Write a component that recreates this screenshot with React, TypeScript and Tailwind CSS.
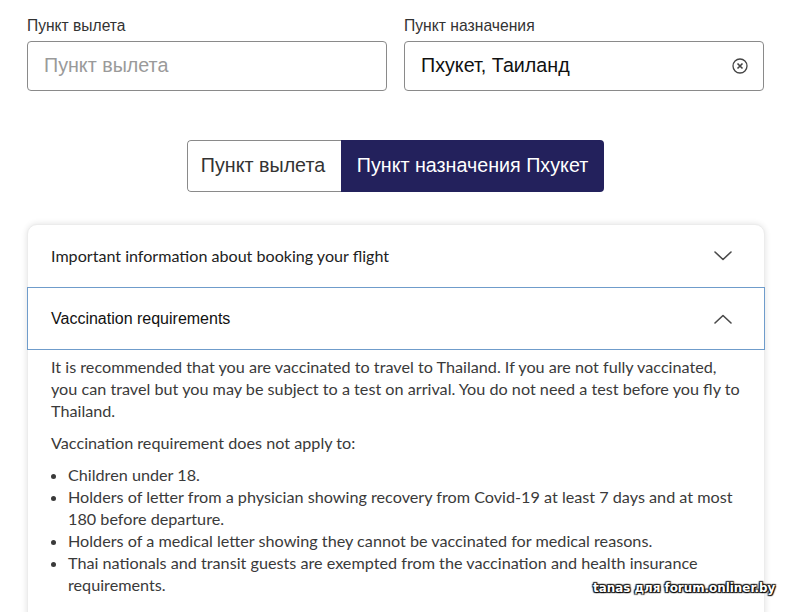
import React from "react";

const Chevron = ({ up }: { up?: boolean }) => (
  <svg width="18" height="10" viewBox="0 0 18 10" fill="none" stroke="#4a4a4a" strokeWidth="1.6" strokeLinecap="round" strokeLinejoin="round">
    {up ? <path d="M1 9 L9 1.5 L17 9" /> : <path d="M1 1 L9 8.5 L17 1" />}
  </svg>
);

export default function App() {
  const sans = { fontFamily: '"Liberation Sans", Arial, sans-serif' };
  const body = { fontFamily: 'Lato, "Open Sans", sans-serif' };
  return (
    <div className="relative w-[800px] h-[612px] overflow-hidden bg-white" style={sans}>
      <div className="px-[27px] pt-[17px]">
        <div className="grid grid-cols-2 gap-[17px] w-[737px]">
          <div>
            <div className="text-[15.6px] text-[#333] leading-[18px] mb-[6px]">Пункт вылета</div>
            <div className="h-[50px] border border-[#8a8a8a] rounded-[4px] flex items-center pl-[16px] text-[19.7px] text-[#9a9a9a]">
              Пункт вылета
            </div>
          </div>
          <div>
            <div className="text-[15.7px] text-[#333] leading-[18px] mb-[6px]">Пункт назначения</div>
            <div className="h-[50px] border border-[#8a8a8a] rounded-[4px] flex items-center justify-between pl-[16px] pr-[15px] text-[19.7px] text-[#111]">
              <span>Пхукет, Таиланд</span>
              <svg width="16" height="16" viewBox="0 0 16 16" fill="none" stroke="#444" strokeWidth="1.3">
                <circle cx="8" cy="8" r="7" />
                <path d="M5.5 5.5 L10.5 10.5 M10.5 5.5 L5.5 10.5" strokeWidth="1.6" />
              </svg>
            </div>
          </div>
        </div>

        <div className="flex justify-center mt-[49px] w-[737px]">
          <div className="flex h-[52px] rounded-[4px] overflow-hidden">
            <div className="w-[154px] border border-r-0 border-[#8a8a8a] rounded-l-[4px] bg-white flex items-center justify-center pr-[3px] text-[19.7px] text-[#333]">
              Пункт вылета
            </div>
            <div className="w-[263px] bg-[#23215c] flex items-center justify-center text-[19.7px] text-white">
              Пункт назначения Пхукет
            </div>
          </div>
        </div>

        <div className="mt-[32px] w-[738px] rounded-t-[10px] border border-[#ececec] shadow-[0_0_6px_rgba(0,0,0,0.12)] bg-white h-[420px]">
          <div className="h-[62px] flex items-center justify-between pl-[23px] pr-[32px] text-[16.1px] text-[#222]" style={body}>
            <span>Important information about booking your flight</span>
            <Chevron />
          </div>
          <div className="h-[63px] flex items-center justify-between pl-[23px] pr-[32px] border border-[#6f9ccb] -mx-px text-[16px] text-[#111]" style={sans}>
            <span>Vaccination requirements</span>
            <Chevron up />
          </div>
          <div className="pl-[23px] pr-[20px] pt-[6px] text-[16.2px] leading-[22px] text-[#3a3a3a]" style={body}>
            <p>
              It is recommended that you are vaccinated to travel to Thailand. If you are not fully vaccinated,
              <br />
              you can travel but you may be subject to a test on arrival. You do not need a test before you fly to
              <br />
              Thailand.
            </p>
            <p className="mt-[10px]">Vaccination requirement does not apply to:</p>
            <ul className="mt-[10px] list-disc pl-[17px]">
              <li>Children under 18.</li>
              <li>Holders of letter from a physician showing recovery from Covid-19 at least 7 days and at most 180 before departure.</li>
              <li>Holders of a medical letter showing they cannot be vaccinated for medical reasons.</li>
              <li>Thai nationals and transit guests are exempted from the vaccination and health insurance requirements.</li>
            </ul>
          </div>
        </div>
      </div>

      <div
        className="absolute left-[593px] top-[580px] text-[11.9px] font-bold text-white whitespace-nowrap"
        style={{
          fontFamily: '"DejaVu Sans", Verdana, sans-serif',
          textShadow: "0 0 2px #000, 1px 1px 1px #000, -1px -1px 1px #222, 1px -1px 1px #222, -1px 1px 1px #222",
        }}
      >
        tanas для forum.onliner.by
      </div>
    </div>
  );
}
